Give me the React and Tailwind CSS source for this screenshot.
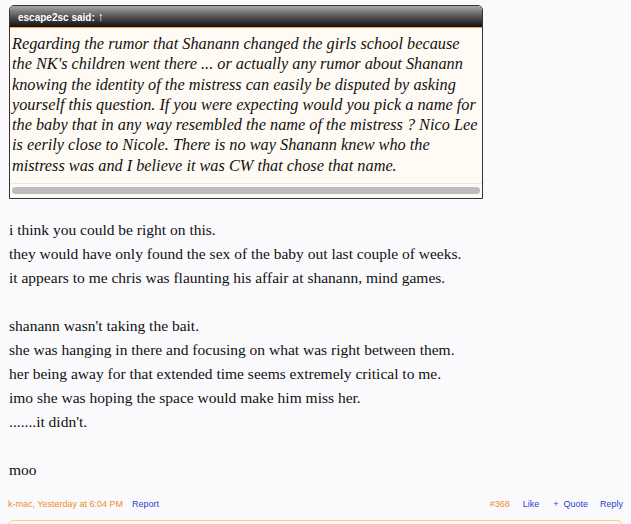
import React from 'react';

const quoteLines = [
  "Regarding the rumor that Shanann changed the girls school because",
  "the NK's children went there ... or actually any rumor about Shanann",
  "knowing the identity of the mistress can easily be disputed by asking",
  "yourself this question. If you were expecting would you pick a name for",
  "the baby that in any way resembled the name of the mistress ? Nico Lee",
  "is eerily close to Nicole. There is no way Shanann knew who the",
  "mistress was and I believe it was CW that chose that name.",
];

const bodyLines = [
  "i think you could be right on this.",
  "they would have only found the sex of the baby out last couple of weeks.",
  "it appears to me chris was flaunting his affair at shanann, mind games.",
  "",
  "shanann wasn't taking the bait.",
  "she was hanging in there and focusing on what was right between them.",
  "her being away for that extended time seems extremely critical to me.",
  "imo she was hoping the space would make him miss her.",
  ".......it didn't.",
  "",
  "moo",
];

export default function App() {
  return (
    <div className="h-screen bg-[#fafafd] pt-[5px] px-[8px] overflow-hidden">
      {/* quote block */}
      <div className="ml-px w-[474px] border border-[#333] rounded-t-[5px] bg-[#fffbf4]">
        <div className="h-[22px] rounded-t-[4px] bg-gradient-to-b from-[#a8a8a8] via-[#555] to-[#111] border-b border-[#f3a54a] flex items-center pl-[8px]">
          <span className="text-white font-bold text-[10px] font-['Liberation_Sans',sans-serif]">
            escape2sc said: <span className="text-[12px]">↑</span>
          </span>
        </div>
        <div className="pt-[6px] pl-[2px] pr-[4px] font-['Liberation_Serif',serif] italic text-[16.3px] leading-[20.3px] text-[#111]">
          {quoteLines.map((l, i) => (
            <div key={i} className="whitespace-nowrap">{l}</div>
          ))}
        </div>
        <div className="mt-[7px] border-t border-[#ebe8e3] px-[2px] pt-[3px] pb-[4px]">
          <div className="h-[7px] rounded-full bg-[#bdbdbd]" />
        </div>
      </div>

      {/* message body */}
      <div className="mt-[19px] ml-px font-['Liberation_Serif',serif] text-[15.5px] leading-[24px] text-[#111]">
        {bodyLines.map((l, i) => (
          <div key={i} className="whitespace-nowrap h-[24px]">{l}</div>
        ))}
      </div>

      {/* footer */}
      <div className="mt-[16px] flex items-center justify-between font-['Liberation_Sans',sans-serif] text-[9px] leading-[12px]">
        <div className="flex items-center">
          <span className="text-[#f08c2a]">k-mac, Yesterday at 6:04 PM</span>
          <span className="ml-[9px] text-[#2b3fd0]">Report</span>
        </div>
        <div className="flex items-center">
          <span className="text-[#f08c2a]">#368</span>
          <span className="ml-[13px] text-[#2b3fd0]">Like</span>
          <span className="ml-[14px] text-[#2b3fd0]">+&nbsp; Quote</span>
          <span className="ml-[12px] text-[#2b3fd0]">Reply</span>
        </div>
      </div>

      <div className="mt-[10px] h-[30px] rounded-[6px] border border-[#f9cc8f] bg-[#fff8ee]" />
    </div>
  );
}
